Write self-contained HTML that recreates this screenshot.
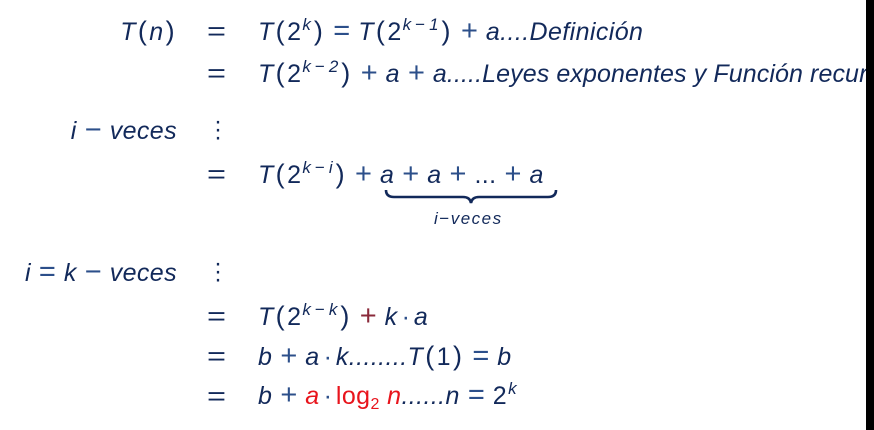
<!DOCTYPE html>
<html><head><meta charset="utf-8"><style>
body{margin:0;width:874px;height:430px;background:#fff;overflow:hidden;position:relative;font-family:"Liberation Sans",sans-serif;color:#12295a}
.l{position:absolute;white-space:nowrap;font-size:25px;line-height:24px;font-style:italic;letter-spacing:0.4px}
.r{text-align:right}
.n{font-style:normal}
.p{font-style:normal;font-size:27px;margin:0 2px}
sup{font-size:17px;vertical-align:10px;line-height:0;letter-spacing:1px;margin-left:1px}
sup i{font-style:normal;margin:0 3px}
sub{font-size:16px;vertical-align:-5px;line-height:0}
.red{color:#e8141c}
.o{color:#2c4f8a;font-style:normal;margin:0 8px;letter-spacing:0;font-size:29px;line-height:0}
.eq{position:absolute;left:207px;font-size:26px;line-height:24px;transform:scaleX(1.25);transform-origin:left}
.bar{position:absolute;left:866px;top:0;width:8px;height:430px;background:#000}
.dots{position:absolute;left:214px;font-size:24px;line-height:8px;font-style:normal}
</style></head><body>
<div class="l r" style="left:0;width:177px;top:19px">T<span class="p">(</span>n<span class="p">)</span></div>
<div class="eq" style="top:19px">=</div>
<div class="l" style="left:258px;top:19px">T<span class="p">(</span><span class="n">2</span><sup>k</sup><span class="p">)</span><span class="o">=</span>T<span class="p">(</span><span class="n">2</span><sup>k<i>−</i>1</sup><span class="p">)</span><span class="o">+</span>a....Definición</div>

<div class="eq" style="top:61px">=</div>
<div class="l" style="left:258px;top:61px">T<span class="p">(</span><span class="n">2</span><sup>k<i>−</i>2</sup><span class="p">)</span><span class="o">+</span>a<span class="o">+</span><span style="letter-spacing:0.1px">a.....Leyes exponentes y Función recursiva</span></div>

<div class="l r" style="left:0;width:177px;top:119px">i<span class="o">−</span>veces</div>
<div class="dots" style="top:118px">·<br>·<br>·</div>

<div class="eq" style="top:162px">=</div>
<div class="l" style="left:258px;top:162px">T<span class="p">(</span><span class="n">2</span><sup>k<i>−</i>i</sup><span class="p">)</span><span class="o">+</span>a<span class="o">+</span>a<span class="o">+</span><span class="n">...</span><span class="o">+</span>a</div>
<svg style="position:absolute;left:384px;top:188px" width="174" height="16"><path d="M2 2 Q2 9 10 9 L79 9 Q86 9 87 15 Q88 9 95 9 L164 9 Q172 9 172 2" fill="none" stroke="#12295a" stroke-width="2.6"/></svg>
<div class="l" style="left:434px;top:207px;font-size:17px;letter-spacing:1.5px">i<span class="n">−</span>veces</div>

<div class="l r" style="left:0;width:177px;top:261px">i<span class="o">=</span>k<span class="o">−</span>veces</div>
<div class="dots" style="top:260px">·<br>·<br>·</div>

<div class="eq" style="top:304px">=</div>
<div class="l" style="left:258px;top:304px">T<span class="p">(</span><span class="n">2</span><sup>k<i>−</i>k</sup><span class="p">)</span><span class="o" style="color:#8a2a3a">+</span>k<span class="o" style="margin:0 4px;font-size:25px">·</span>a</div>
<div class="eq" style="top:344px">=</div>
<div class="l" style="left:258px;top:344px">b<span class="o">+</span>a<span class="o" style="margin:0 4px;font-size:25px">·</span>k........T<span class="p">(</span><span class="n">1</span><span class="p">)</span><span class="o">=</span>b</div>
<div class="eq" style="top:384px">=</div>
<div class="l" style="left:258px;top:384px">b<span class="o">+</span><span class="red">a</span><span class="o" style="margin:0 4px;font-size:25px">·</span><span class="red n">log<sub>2</sub></span> <span class="red">n</span>......n<span class="o">=</span><span class="n">2</span><sup>k</sup></div>
<div class="bar"></div>
</body></html>
